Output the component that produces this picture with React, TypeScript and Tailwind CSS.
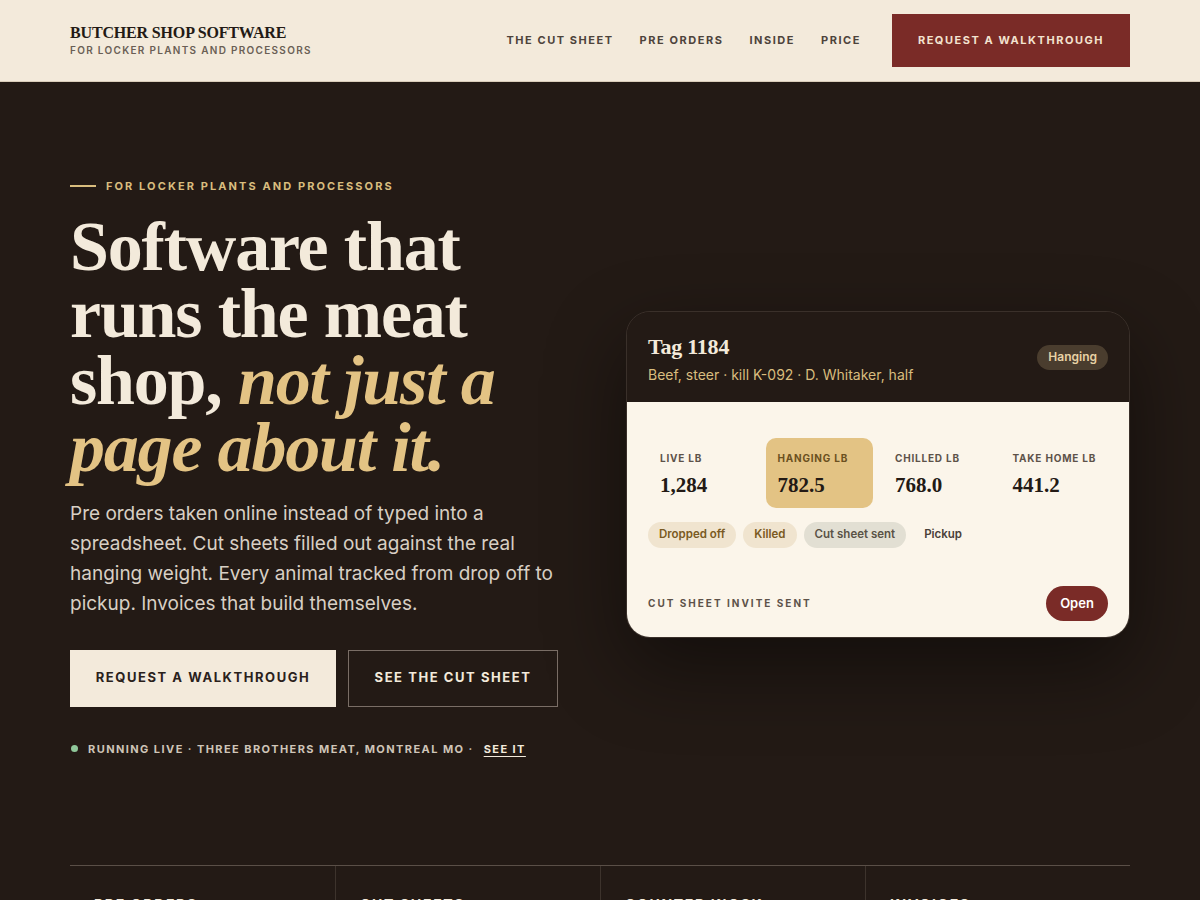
import React from "react";

const serif = { fontFamily: '"Liberation Serif", "DejaVu Serif", serif' };
const sans = { fontFamily: 'Inter, "Liberation Sans", sans-serif' };

export default function App() {
  return (
    <div className="min-h-screen bg-[#231a15]" style={sans}>
      <header className="bg-[#f3eadb] border-b border-[#d9cdb9] h-[82px] px-[70px] flex items-center justify-between">
        <div className="flex flex-col">
          <div className="text-[16px] font-bold text-[#231a15] tracking-[-0.01em] leading-[18px]" style={serif}>
            BUTCHER SHOP SOFTWARE
          </div>
          <div className="text-[10px] font-semibold tracking-[0.13em] text-[#6a5f55] leading-[14px] mt-[1px]">
            FOR LOCKER PLANTS AND PROCESSORS
          </div>
        </div>
        <nav className="flex items-center">
          <div className="flex items-center gap-[26px] text-[11px] font-bold tracking-[0.14em] text-[#4d433b] mr-[31px]">
            <span>THE CUT SHEET</span>
            <span>PRE ORDERS</span>
            <span>INSIDE</span>
            <span>PRICE</span>
          </div>
          <button className="w-[238px] h-[53px] bg-[#7a2b27] text-[#f3e3d0] text-[11px] font-bold tracking-[0.14em]">
            REQUEST A WALKTHROUGH
          </button>
        </nav>
      </header>

      <section className="px-[70px] pt-[96px] pb-[108px] flex items-center justify-between">
        <div className="w-[500px]">
          <div className="flex items-center gap-[10px]">
            <div className="w-[26px] h-[2px] bg-[#d9bd7e]" />
            <span className="text-[11px] font-bold tracking-[0.19em] text-[#d9bd7e]">FOR LOCKER PLANTS AND PROCESSORS</span>
          </div>
          <h1
            className="mt-[18px] text-[70px] leading-[67px] font-bold tracking-[-0.017em] text-[#f3eadb]"
            style={serif}
          >
            Software that runs the meat shop, <em className="text-[#e3c384] italic">not just a page about it.</em>
          </h1>
          <p className="mt-[18px] text-[19px] leading-[30px] text-[#d8cfc4] w-[495px]">
            Pre orders taken online instead of typed into a spreadsheet. Cut sheets filled out against the real hanging weight. Every animal tracked from drop off to pickup. Invoices that build themselves.
          </p>
          <div className="mt-[31px] flex gap-[12px]">
            <button className="w-[266px] h-[57px] bg-[#f3eadb] text-[#2a211b] text-[13px] font-bold tracking-[0.12em]">
              REQUEST A WALKTHROUGH
            </button>
            <button className="w-[210px] h-[57px] border border-[#7a6e66] text-[#f3eadb] text-[13px] font-bold tracking-[0.12em]">
              SEE THE CUT SHEET
            </button>
          </div>
          <div className="mt-[34px] flex items-center text-[11px] font-bold tracking-[0.13em] text-[#cfc5b8]">
            <span className="w-[7px] h-[7px] rounded-full bg-[#8fc79a] ml-[1px] mr-[10px]" />
            <span>RUNNING LIVE · THREE BROTHERS MEAT, MONTREAL MO ·</span>
            <span className="ml-[10px] text-[#f3eadb] underline underline-offset-[3px]">SEE IT</span>
          </div>
        </div>

        <div className="mt-[14px] w-[504px] rounded-[24px] border border-[#3a302a] overflow-hidden shadow-[0_30px_80px_rgba(0,0,0,0.45)]">
          <div className="bg-[#231a15] h-[90px] px-[21px] flex items-center justify-between">
            <div className="pt-[4px]">
              <div className="text-[22px] font-bold text-[#f3eadb] leading-[26px] tracking-[-0.01em]" style={serif}>Tag 1184</div>
              <div className="mt-[6px] text-[14px] text-[#d9bd7e] leading-[18px]">Beef, steer · kill K-092 · D. Whitaker, half</div>
            </div>
            <span className="h-[25px] px-[11px] rounded-full bg-[#4a3d2e] text-[#e8d2a5] text-[12px] font-semibold flex items-center">
              Hanging
            </span>
          </div>
          <div className="bg-[#fbf5ea] px-[21px] pt-[36px] pb-[16px]">
            <div className="grid grid-cols-4 gap-[10px]">
              {[
                ["LIVE LB", "1,284", false],
                ["HANGING LB", "782.5", true],
                ["CHILLED LB", "768.0", false],
                ["TAKE HOME LB", "441.2", false],
              ].map(([l, v, h]) => (
                <div
                  key={l as string}
                  className={`h-[70px] rounded-[10px] px-[12px] pt-[13px] ${h ? "bg-[#e3c384]" : ""}`}
                >
                  <div className={`text-[10px] font-bold tracking-[0.08em] whitespace-nowrap ${h ? "text-[#6b5020]" : "text-[#5d5249]"}`}>{l}</div>
                  <div className="mt-[6px] text-[21px] font-bold text-[#231a15] leading-[26px]" style={serif}>{v}</div>
                </div>
              ))}
            </div>
            <div className="mt-[14px] flex items-center gap-[7px] text-[11.5px] font-semibold">
              <span className="h-[26px] px-[11px] rounded-full bg-[#f0e4cf] text-[#7a5a22] flex items-center">Dropped off</span>
              <span className="h-[26px] px-[11px] rounded-full bg-[#f0e4cf] text-[#7a5a22] flex items-center">Killed</span>
              <span className="h-[26px] px-[11px] rounded-full bg-[#e2dfd3] text-[#5a5246] flex items-center">Cut sheet sent</span>
              <span className="h-[26px] px-[11px] text-[#4a4039] flex items-center">Pickup</span>
            </div>
            <div className="mt-[38px] flex items-center justify-between">
              <span className="text-[10px] font-bold tracking-[0.2em] text-[#5d5249]">CUT SHEET INVITE SENT</span>
              <button className="h-[35px] w-[62px] rounded-full bg-[#7a2b27] text-white text-[13px] font-semibold">Open</button>
            </div>
          </div>
        </div>
      </section>

      <section className="mx-[70px] border-t border-[#5a4f47] grid grid-cols-4">
        {["PRE ORDERS", "CUT SHEETS", "COUNTER KIOSK", "INVOICES"].map((t, i) => (
          <div key={t} className={`px-[24px] pt-[28px] pb-[40px] ${i > 0 ? "border-l border-[#3d332c]" : ""}`}>
            <div className="text-[14px] font-bold tracking-[0.12em] text-[#f3eadb]">{t}</div>
          </div>
        ))}
      </section>
    </div>
  );
}
